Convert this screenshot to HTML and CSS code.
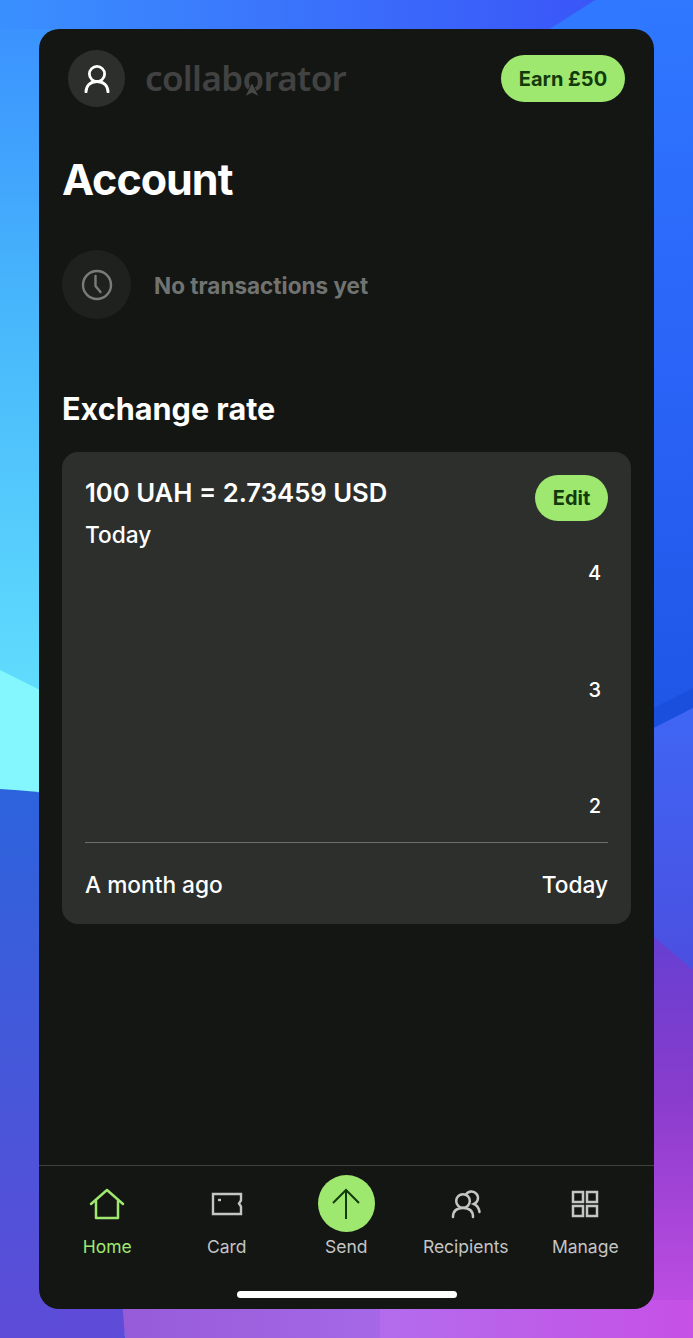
FILE: index.html
```html
<!DOCTYPE html>
<html lang="en">
<head>
  <meta charset="UTF-8" />
  <title>Account</title>
  <link rel="stylesheet" href="styles.css">
</head>
<body>
  <svg class="wallpaper" viewBox="0 0 693 1338" preserveAspectRatio="none" aria-hidden="true">
    <defs>
      <linearGradient id="top" gradientUnits="userSpaceOnUse" x1="0" y1="0" x2="600" y2="0">
        <stop offset="0" stop-color="#3a90ff"/>
        <stop offset="1" stop-color="#3a55f8"/>
      </linearGradient>
      <linearGradient id="left" gradientUnits="userSpaceOnUse" x1="0" y1="0" x2="0" y2="680">
        <stop offset="0" stop-color="#3a8fff"/>
        <stop offset="0.45" stop-color="#47b6fb"/>
        <stop offset="1" stop-color="#5fdbfd"/>
      </linearGradient>
      <linearGradient id="low" gradientUnits="userSpaceOnUse" x1="0" y1="790" x2="0" y2="1338">
        <stop offset="0" stop-color="#2c63dc"/>
        <stop offset="1" stop-color="#5e4cd8"/>
      </linearGradient>
      <linearGradient id="right" gradientUnits="userSpaceOnUse" x1="0" y1="0" x2="0" y2="720">
        <stop offset="0" stop-color="#2f78ff"/>
        <stop offset="0.5" stop-color="#2a64f8"/>
        <stop offset="1" stop-color="#1f56e6"/>
      </linearGradient>
      <linearGradient id="mid" gradientUnits="userSpaceOnUse" x1="0" y1="710" x2="0" y2="970">
        <stop offset="0" stop-color="#3f66f5"/>
        <stop offset="1" stop-color="#4b4fe0"/>
      </linearGradient>
      <linearGradient id="violet" gradientUnits="userSpaceOnUse" x1="0" y1="940" x2="0" y2="1338">
        <stop offset="0" stop-color="#663fd2"/>
        <stop offset="0.4" stop-color="#8a3ccc"/>
        <stop offset="1" stop-color="#c650e6"/>
      </linearGradient>
      <linearGradient id="bottom" gradientUnits="userSpaceOnUse" x1="122" y1="0" x2="380" y2="0">
        <stop offset="0" stop-color="#965cd8"/>
        <stop offset="1" stop-color="#a668e6"/>
      </linearGradient>
      <linearGradient id="bottom-right" gradientUnits="userSpaceOnUse" x1="380" y1="0" x2="693" y2="0">
        <stop offset="0" stop-color="#b36cec"/>
        <stop offset="1" stop-color="#c650e6"/>
      </linearGradient>
    </defs>
    <rect width="693" height="1338" fill="url(#left)"/>
    <rect width="693" height="29" fill="url(#top)"/>
    <path d="M595 0L540 35H693V0Z" fill="#2f78ff"/>
    <rect x="640" y="0" width="53" height="730" fill="url(#right)"/>
    <path d="M640 715L693 688V708L640 735Z" fill="#1a4fde"/>
    <path d="M0 670L60 700V820L0 790Z" fill="#84f6fe"/>
    <path d="M0 789C20 790 40 792 60 795V1338H0Z" fill="url(#low)"/>
    <path d="M640 735L693 708V975L640 930Z" fill="url(#mid)"/>
    <path d="M640 925L693 970V1338H640Z" fill="url(#violet)"/>
    <path d="M120 1300H380V1338H125Z" fill="url(#bottom)"/>
    <path d="M380 1300H693V1338H380Z" fill="url(#bottom-right)"/>
    <path d="M60 1300H122L125 1338H60Z" fill="#5e4cd8"/>
  </svg>

  <main class="phone">
    <header class="topbar">
      <div class="avatar">
        <svg width="26" height="28" viewBox="0 0 26 28" fill="none" stroke="#fff" stroke-width="2.800" stroke-linecap="round">
          <circle cx="13" cy="9" r="7.600"/>
          <path d="M2 27c0-6 4-10.500 11-10.500S24 21 24 27"/>
        </svg>
      </div>
      <div class="logo">
        collaborator
        <svg class="logo-arrow" width="16" height="15" viewBox="0 0 16 15"><path d="M8 0.500L15 14.500 8 11 1 14.500Z" fill="#474847" stroke="#141614" stroke-width="0.800"/></svg>
      </div>
      <a class="pill earn">Earn £50</a>
    </header>

    <section class="content">
      <h1>Account</h1>

      <div class="empty">
        <div class="empty-icon">
          <svg width="32" height="32" viewBox="0 0 32 32" fill="none" stroke="#7a7c7a" stroke-width="2.400" stroke-linecap="round">
            <circle cx="16" cy="16" r="14"/>
            <path d="M14.500 7v10l5 6"/>
          </svg>
        </div>
        <span>No transactions yet</span>
      </div>

      <h2>Exchange rate</h2>

      <div class="card">
        <div class="card-head">
          <div>
            <div class="rate">100 UAH = 2.73459 USD</div>
            <div class="rate-date">Today</div>
          </div>
          <a class="pill edit">Edit</a>
        </div>
        <div class="chart">
          <span>4</span>
          <span>3</span>
          <span>2</span>
        </div>
        <div class="axis">
          <span>A month ago</span>
          <span>Today</span>
        </div>
      </div>
    </section>

    <nav class="tabs">
      <a class="tab active">
        <span class="tab-icon">
          <svg width="36" height="32" viewBox="0 0 36 32" fill="none" stroke="#9fe870" stroke-width="2.500" stroke-linejoin="round" stroke-linecap="round">
            <path d="M2 16L18 2l16 14"/>
            <path d="M7 13v17h22V13"/>
          </svg>
        </span>
        Home
      </a>
      <a class="tab">
        <span class="tab-icon">
          <svg width="32" height="24" viewBox="0 0 32 24" fill="none" stroke="#c4c5c4" stroke-width="2.400">
            <path d="M2 2h28v6.500l-2 3 2 3V22H2z"/>
            <path d="M7 8h3"/>
          </svg>
        </span>
        Card
      </a>
      <a class="tab send">
        <span class="send-btn">
          <svg width="30" height="32" viewBox="0 0 30 32" fill="none" stroke="#123b0c" stroke-width="2">
            <path d="M15 31V2M2 15L15 2l13 13"/>
          </svg>
        </span>
        Send
      </a>
      <a class="tab">
        <span class="tab-icon">
          <svg width="30" height="30" viewBox="0 0 30 30" fill="none" stroke="#c4c5c4" stroke-width="2.500" stroke-linecap="round">
            <circle cx="12" cy="12" r="6.800"/>
            <path d="M2 28c0-6 4-9 10-9s10 3 10 9"/>
            <path d="M15 5.500A6.500 6.500 0 1 1 23 15c3.500 1.500 5 5 5.500 8"/>
          </svg>
        </span>
        Recipients
      </a>
      <a class="tab">
        <span class="tab-icon">
          <svg width="28" height="28" viewBox="0 0 28 28" fill="none" stroke="#c4c5c4" stroke-width="2.500">
            <rect x="2" y="2" width="10" height="10"/>
            <rect x="16" y="2" width="10" height="10"/>
            <rect x="2" y="16" width="10" height="10"/>
            <rect x="16" y="16" width="10" height="10"/>
          </svg>
        </span>
        Manage
      </a>
    </nav>
    <div class="home-bar"></div>
  </main>
</body>
</html>
```

FILE: styles.css
```css
* {
  box-sizing: border-box;
}
html, body {
  margin: 0;
  height: 100%;
}
body {
  position: relative;
  overflow: hidden;
  padding: 29px 39px;
  font-family: Inter, "Liberation Sans", sans-serif;
  color: #fff;
  background: #3a8bff;
}
.wallpaper {
  position: absolute;
  inset: 0;
  width: 100%;
  height: 100%;
}
.phone {
  position: relative;
  display: flex;
  flex-direction: column;
  width: 615px;
  height: 1280px;
  background: #141614;
  border-radius: 20px;
  overflow: hidden;
}
.topbar {
  display: flex;
  align-items: center;
  height: 57px;
  margin-top: 21px;
  padding: 0 29px;
}
.avatar {
  display: flex;
  align-items: center;
  justify-content: center;
  flex: none;
  width: 57px;
  height: 57px;
  border-radius: 50%;
  background: #2d2f2d;
}
.logo {
  position: relative;
  margin: -3px 0 0 20px;
  font-family: "Noto Sans", sans-serif;
  font-size: 35px;
  font-weight: 600;
  letter-spacing: -0.650px;
  line-height: 57px;
  color: #414241;
}
.logo-arrow {
  position: absolute;
  left: 99px;
  top: 33px;
}
.pill {
  display: flex;
  align-items: center;
  justify-content: center;
  border-radius: 24px;
  background: #9fe870;
  color: #123b0c;
  font-weight: 700;
}
.earn {
  margin-left: auto;
  width: 124px;
  height: 47px;
  font-size: 20px;
}
.content {
  flex: 1;
  padding: 0 23px;
}
h1 {
  margin: 46px 0 0;
  font-size: 43px;
  line-height: 52px;
  font-weight: 700;
  letter-spacing: -1px;
}
.empty {
  display: flex;
  align-items: center;
  gap: 23px;
  margin-top: 45px;
}
.empty-icon {
  display: flex;
  align-items: center;
  justify-content: center;
  width: 69px;
  height: 69px;
  border-radius: 50%;
  background: #1f211f;
}
.empty span {
  margin-top: 2px;
  font-size: 22.500px;
  font-weight: 700;
  color: #717371;
}
h2 {
  margin: 70px 0 0;
  font-size: 30.600px;
  line-height: 40px;
  font-weight: 700;
}
.card {
  display: flex;
  flex-direction: column;
  height: 472px;
  margin-top: 23px;
  padding: 23px 23px 0;
  background: #2d2f2d;
  border-radius: 16px;
}
.card-head {
  display: flex;
  justify-content: space-between;
  align-items: flex-start;
}
.rate {
  margin-top: 1px;
  font-size: 25.700px;
  line-height: 34px;
  font-weight: 600;
}
.rate-date {
  margin-top: 10px;
  font-size: 22.700px;
  line-height: 30px;
  font-weight: 500;
}
.edit {
  width: 73px;
  height: 46px;
  font-size: 20px;
}
.chart {
  display: flex;
  flex-direction: column;
  align-items: flex-end;
  justify-content: space-between;
  height: 293px;
  padding: 11px 7px 24px 0;
  border-bottom: 1px solid #6e706e;
  font-size: 20px;
  font-weight: 500;
  line-height: 24px;
}
.axis {
  display: flex;
  justify-content: space-between;
  margin-top: 27px;
  font-size: 22.700px;
  line-height: 30px;
  font-weight: 500;
}
.tabs {
  display: grid;
  grid-template-columns: repeat(5, 119.500px);
  height: 126px;
  padding: 9px 8.500px 0;
  border-top: 1px solid #3f413f;
}
.tab {
  display: flex;
  flex-direction: column;
  align-items: center;
  font-size: 17.500px;
  line-height: 22px;
  color: #c4c5c4;
}
.tab.active {
  color: #9fe870;
}
.tab-icon {
  display: flex;
  align-items: center;
  justify-content: center;
  height: 57px;
  margin-bottom: 4px;
}
.send-btn {
  display: flex;
  align-items: center;
  justify-content: center;
  width: 57px;
  height: 57px;
  margin-bottom: 4px;
  border-radius: 50%;
  background: #9fe870;
}
.home-bar {
  width: 220px;
  height: 7px;
  margin: 0 auto 11px;
  border-radius: 4px;
  background: #fff;
}
```
